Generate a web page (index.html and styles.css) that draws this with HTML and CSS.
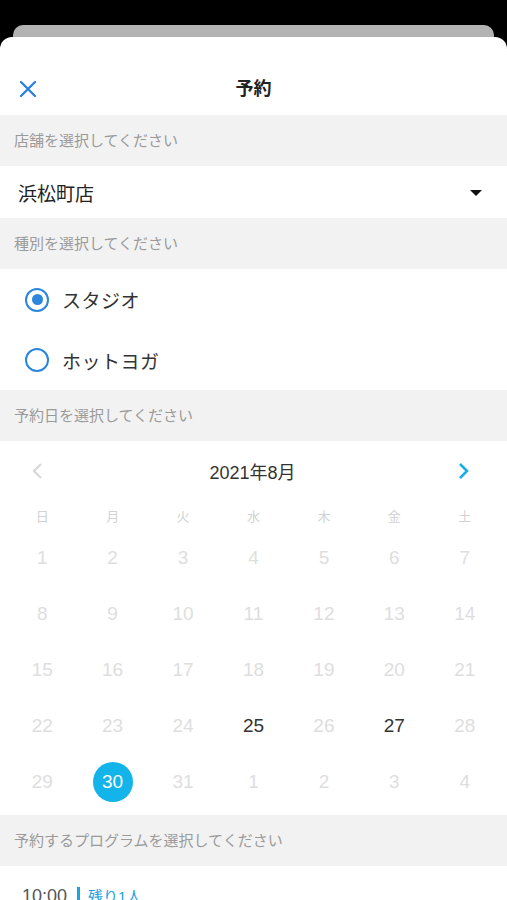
FILE: index.html
```html
<!DOCTYPE html>
<html lang="ja">
<head>
    <meta charset="UTF-8">
    <meta name="viewport" content="width=device-width, initial-scale=1.0">
    <title>予約</title>
    <link rel="stylesheet" href="styles.css">
</head>
<body>

    <div class="back-card"></div>

    <div class="sheet">
        <!-- Header -->
        <div class="header">
            <span class="close">
                <svg width="20" height="20" viewBox="0 0 20 20"><path d="M3 3 L17 17 M17 3 L3 17" stroke="#2a7fe3" stroke-width="2.3" stroke-linecap="round" fill="none"/></svg>
            </span>
            <h1>予約</h1>
        </div>

        <!-- Store -->
        <div class="label">店舗を選択してください</div>
        <div class="select-row">
            <span>浜松町店</span>
            <span class="caret"></span>
        </div>

        <!-- Type -->
        <div class="label">種別を選択してください</div>
        <div class="radio-row">
            <span class="radio checked"></span>
            <span>スタジオ</span>
        </div>
        <div class="radio-row">
            <span class="radio"></span>
            <span>ホットヨガ</span>
        </div>

        <!-- Date -->
        <div class="label">予約日を選択してください</div>
        <div class="calendar">
            <div class="cal-head">
                <svg class="chev" width="12" height="18" viewBox="0 0 12 18"><path d="M10 2 L3 9 L10 16" stroke="#d8d8d8" stroke-width="2.2" fill="none"/></svg>
                <span class="month">2021年8月</span>
                <svg class="chev" width="12" height="18" viewBox="0 0 12 18"><path d="M2 2 L9 9 L2 16" stroke="#1aaee8" stroke-width="2.6" fill="none"/></svg>
            </div>
            <div class="week">
                <span>日</span><span>月</span><span>火</span><span>水</span><span>木</span><span>金</span><span>土</span>
            </div>
            <div class="days" id="days"></div>
        </div>

        <!-- Program -->
        <div class="label">予約するプログラムを選択してください</div>
        <div class="program">
            <span class="time">10:00</span>
            <span class="remain">残り1人</span>
        </div>
    </div>

    <script>
        // August 2021 starts on a Sunday
        const available = [25, 27];
        const selected = 30;
        const days = document.getElementById("days");
        for (let i = 1; i <= 35; i++) {
            const d = i > 31 ? i - 31 : i;
            const cell = document.createElement("div");
            cell.className = "day";
            const num = document.createElement("span");
            num.textContent = d;
            if (i <= 31 && available.includes(d)) cell.classList.add("open");
            if (i <= 31 && d === selected) cell.classList.add("selected");
            cell.appendChild(num);
            days.appendChild(cell);
        }
    </script>

</body>
</html>
```

FILE: styles.css
```css
/* General */
body { margin: 0; background-color: #000; font-family: "Liberation Sans", "Noto Sans CJK JP", sans-serif; }
.back-card { height: 12px; margin: 25px 13px 0; background-color: #b3b3b3; border-radius: 10px 10px 0 0; }
.sheet { background-color: #fff; border-radius: 12px 12px 0 0; min-height: 863px; overflow: hidden; }

/* Header */
.header { height: 78px; box-sizing: border-box; padding-top: 26px; display: flex; align-items: center; justify-content: center; position: relative; }
.header h1 { margin: 0; font-size: 18px; font-weight: bold; color: #222; height: 52px; line-height: 52px; }
.close { position: absolute; left: 18px; top: 42px; width: 20px; height: 20px; }

/* Section labels */
.label { height: 51px; line-height: 51px; padding-left: 14px; background-color: #f2f2f2; color: #9a9a9a; font-size: 15px; }

/* Store select */
.select-row { height: 52px; display: flex; align-items: center; justify-content: space-between; padding: 0 25px 0 18px; font-size: 19px; color: #222; }
.caret { width: 0; height: 0; border-left: 6px solid transparent; border-right: 6px solid transparent; border-top: 6px solid #111; margin-top: 2px; }

/* Radios */
.radio-row { height: 61px; display: flex; align-items: center; gap: 13px; padding-left: 25px; font-size: 19px; color: #333; letter-spacing: 0.5px; }
.radio-row + .radio-row { height: 60px; }
.radio { width: 24px; height: 24px; box-sizing: border-box; border: 2.5px solid #2b86dc; border-radius: 50%; display: flex; align-items: center; justify-content: center; }
.radio.checked::after { content: ""; width: 11px; height: 11px; border-radius: 50%; background-color: #2b86dc; }

/* Calendar */
.calendar { padding: 0 7px 5px; }
.cal-head { height: 60px; display: flex; align-items: center; justify-content: space-between; padding: 0 30px 0 24px; }
.month { font-size: 18px; color: #333; padding-left: 4px; }
.week { height: 29px; display: grid; grid-template-columns: repeat(7, 1fr); align-items: center; text-align: center; font-size: 13px; color: #d2d2d2; }
.days { display: grid; grid-template-columns: repeat(7, 1fr); grid-auto-rows: 56px; }
.day { display: flex; align-items: center; justify-content: center; font-size: 19px; color: #dedede; }
.day.open { color: #333; }
.day span { width: 40px; height: 40px; border-radius: 50%; display: flex; align-items: center; justify-content: center; }
.day.selected span { background-color: #12b4ea; color: #fff; }

/* Program list */
.program { padding: 20px 22px; display: flex; align-items: center; gap: 10px; }
.time { font-size: 18px; color: #555; }
.remain { font-size: 15px; color: #1aa3e3; border-left: 3px solid #1aa3e3; padding-left: 8px; line-height: 20px; }
```
